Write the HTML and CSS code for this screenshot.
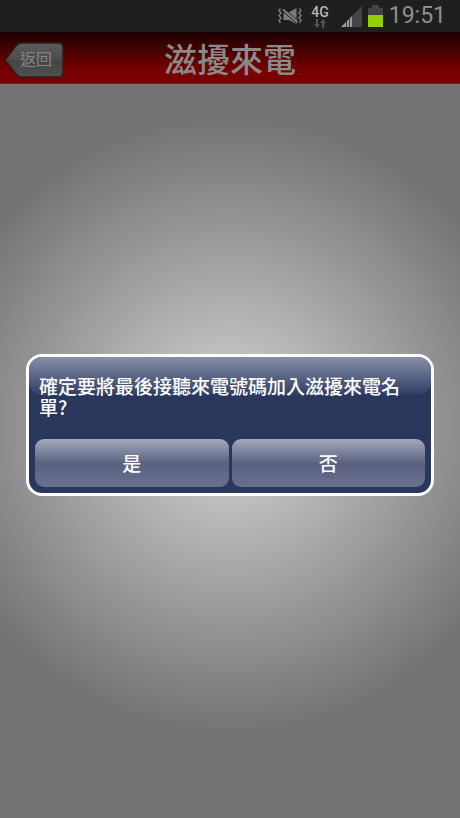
FILE: index.html
```html
<!DOCTYPE html>
<html lang="zh-Hant">
<head>
  <meta charset="UTF-8">
  <meta name="viewport" content="width=device-width, initial-scale=1.0">
  <title>滋擾來電</title>
  <link rel="stylesheet" href="styles.css">
</head>
<body>
  <div class="status-bar">
    <svg class="icon-vibrate" width="24" height="18" viewBox="0 0 24 18" aria-hidden="true">
      <g fill="none" stroke="#7c7c7c" stroke-width="1.400">
        <path d="M2.500 1.500L1 3.500l2 2.500-2 2.500 2 2.500-2 2.500 1.500 2.500"/>
        <path d="M21.500 1.500L23 3.500l-2 2.500 2 2.500-2 2.500 2 2.500-1.500 2.500"/>
      </g>
      <path d="M5.500 5.500h5L18.500 1v16L11 13H5.500z" fill="#7c7c7c"/>
      <path d="M7 2.500L19 12.800" stroke="#1f1f1f" stroke-width="1"/>
      <path d="M5 2.500L19.500 15" stroke="#7c7c7c" stroke-width="2"/>
      <path d="M5 4.500L18 15.700" stroke="#1f1f1f" stroke-width="1"/>
    </svg>
    <div class="network">
      <span class="network-type">4G</span>
      <svg width="14" height="9" viewBox="0 0 14 9" aria-hidden="true">
        <path d="M3 0h2v5h2L4 9 1 5h2zM9 9h2V4h2l-3-4-3 4h2z" fill="#555"/>
      </svg>
    </div>
    <svg class="icon-signal" width="21" height="21" viewBox="0 0 21 21" aria-hidden="true">
      <path d="M0 21L21 0v21z" fill="#444"/>
      <path d="M0 21l5-5v5zM6 21v-6l2-2v8zM9 21v-9l2-2v11z" fill="#9a9a9a"/>
    </svg>
    <svg class="icon-battery" width="15" height="22" viewBox="0 0 15 22" aria-hidden="true">
      <path d="M0 3h4V0h7v3h4v8H0z" fill="#444"/>
      <path d="M0 10h15v12H0z" fill="#96d000"/>
    </svg>
    <span class="clock">19:51</span>
  </div>

  <div class="screen">
    <header class="title-bar">
      <button type="button" class="back-button">
        <svg class="back-shape" width="60" height="36" viewBox="0 0 60 36" aria-hidden="true">
          <defs>
            <linearGradient id="back-fill" x1="0" y1="0" x2="0" y2="1">
              <stop offset="0" stop-color="#5c5c5c"/>
              <stop offset="0.500" stop-color="#4c4c4c"/>
              <stop offset="0.510" stop-color="#444"/>
              <stop offset="1" stop-color="#505050"/>
            </linearGradient>
          </defs>
          <path d="M1 19Q0 18 1 17L11 4Q13 1 17 1H53Q58 1 58 6V30Q58 35 53 35H17Q13 35 11 32Z" fill="url(#back-fill)" stroke="#2c2020" stroke-width="1.500"/>
        </svg>
        <span class="back-label">返回</span>
      </button>
      <h1>滋擾來電</h1>
    </header>

    <div class="overlay">
      <div class="dialog" role="alertdialog" aria-modal="true" aria-labelledby="message">
        <p id="message" class="message">確定要將最後接聽來電號碼加入滋擾來電名單?</p>
        <div class="actions">
          <button type="button">是</button>
          <button type="button">否</button>
        </div>
      </div>
    </div>
  </div>
</body>
</html>
```

FILE: styles.css
```css
* {
  box-sizing: border-box;
}

body {
  display: flex;
  flex-direction: column;
  min-height: 100vh;
  margin: 0;
  font-family: Roboto, "Noto Sans CJK TC", sans-serif;
  background-color: #747474;
}

button {
  padding: 0;
  border: none;
  font-family: inherit;
  cursor: pointer;
}

/* Status bar */
.status-bar {
  display: flex;
  justify-content: flex-end;
  align-items: center;
  height: 32px;
  padding: 0 14px;
  background-color: #1f1f1f;
  color: #8f8f8f;
}

.icon-vibrate {
  margin-right: 9px;
}

.network {
  display: flex;
  flex-direction: column;
  align-items: center;
  margin-right: 12px;
}

.network-type {
  font-size: 14px;
  line-height: 14px;
  font-weight: 500;
  color: #b4b4b4;
}

.icon-signal {
  margin-right: 6px;
}

.icon-battery {
  margin-right: 6px;
}

.clock {
  font-size: 23px;
  line-height: 32px;
}

/* Page */
.screen {
  position: relative;
  display: flex;
  flex-direction: column;
  flex: 1;
  background: radial-gradient(circle 305px at center, #d6d6d6, #747474);
}

.title-bar {
  display: grid;
  grid-template-columns: 1fr auto 1fr;
  align-items: center;
  height: 52px;
  padding: 4px 5px 0;
  border-bottom: 1px solid #7a2222;
  background: linear-gradient(#1a0000, #780000 75%, #780000);
}

.title-bar h1 {
  margin: 0;
  padding-top: 2px;
  font-size: 33px;
  line-height: 46px;
  font-weight: 500;
  color: #8a8a8a;
}

.back-button {
  display: grid;
  place-items: center;
  justify-self: start;
  background: none;
  color: #858585;
}

.back-shape,
.back-label {
  grid-area: 1 / 1;
}

.back-label {
  padding-left: 2px;
  font-size: 16px;
  line-height: 20px;
}

/* Dialog */
.overlay {
  position: absolute;
  inset: 0;
  display: flex;
  justify-content: center;
  align-items: center;
  padding: 0 26px;
}

.dialog {
  position: relative;
  width: 100%;
  padding: 18px 6px 6px;
  border: 3px solid #fff;
  border-radius: 16px;
  background-color: #2a375c;
}

/* glossy highlight behind the message */
.dialog::before {
  content: "";
  position: absolute;
  inset: 0 0 auto;
  height: 38px;
  border-radius: 13px;
  background: linear-gradient(#8790aa, #303d63);
}

.message {
  position: relative;
  margin: 0 0 22px;
  padding: 0 4px;
  font-family: "Noto Sans CJK TC", sans-serif;
  font-size: 19px;
  line-height: 21px;
  font-weight: 500;
  color: #fff;
}

.actions {
  display: grid;
  grid-template-columns: 1fr 1fr;
  gap: 3px;
}

.actions button {
  height: 48px;
  padding-bottom: 2px;
  border-radius: 9px;
  background: linear-gradient(#a3a8bb, #59617f 52%, #6a7190);
  color: #fff;
  font-size: 19px;
  font-weight: 500;
}
```
